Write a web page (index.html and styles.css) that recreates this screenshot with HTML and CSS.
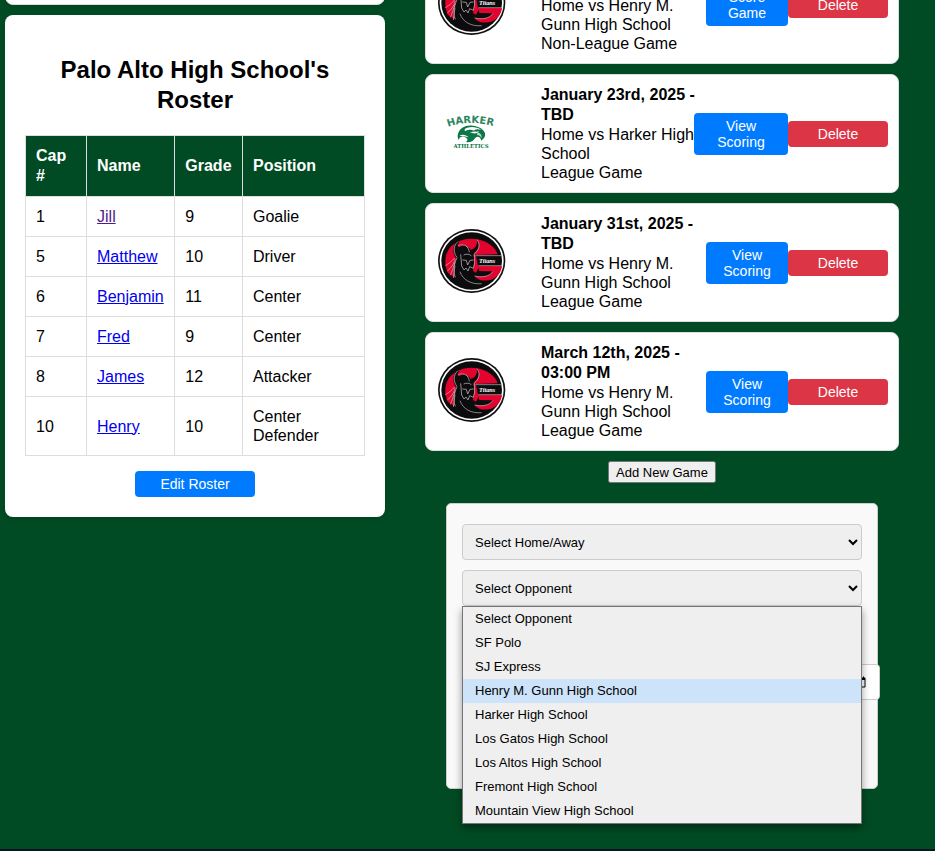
FILE: index.html
```html
<!DOCTYPE html>
<html lang="en">
<head>
<meta charset="utf-8">
<meta name="viewport" content="width=device-width, initial-scale=1">
<title>Palo Alto High School</title>
<link rel="stylesheet" href="styles.css">
</head>
<body>
<svg class="symbols" aria-hidden="true">
  <symbol id="titans" viewBox="18 37 210 210">
    <ellipse cx="125" cy="136" rx="101" ry="96" fill="#111"/>
    <ellipse cx="125" cy="136" rx="96" ry="91" fill="#fff"/>
    <ellipse cx="125" cy="136" rx="91" ry="86" fill="#0c0c0e"/>
    <path d="M84 78C100 70 121 67 142 71c32 6 54 24 61 45l-66 2-5-6c16-12 19-28 9-39 1 16-4 25-19 30-7-13-22-17-32-10-8 3-10-5-2-13z" fill="#e4032e"/>
    <path d="M76 83c-9 16-7 33 2 44-7 15-12 34-5 58l-19-13c-11-23-11-47 0-67 6-10 13-17 22-22z" fill="#e4032e"/>
    <path d="M145 151h71c-3 23-18 39-41 43-18 3-33-2-42-14 22 4 47 3 56-13l-41-1z" fill="#e4032e"/>
    <path d="M128 116c5 8 7 19 4 30l-3 20 9 5 11-20h-5l-6-31z" fill="#e4032e"/>
    <path d="M84 78c-15 12-14 34-3 47M141 72c11 14 7 32-9 44M108 90c6 5 9 12 10 20M81 126c-9 20-13 40-5 59M85 90c8-4 22-4 29 7" fill="none" stroke="#a9a4a4" stroke-width="2.5"/>
    <path d="M92 116l3 35 7 12 6-6 6 9 5-13 11 5 4-16-1-27M97 133l12 1 4 14 7-14 11-1M101 118c8-4 17-3 23 2" fill="none" stroke="#aaa" stroke-width="2.5"/>
    <path d="M76 130c-6 17-11 25-24 36M75 139c-5 17-9 29-14 40M75 150l-5 37M74 127c-8 9-16 16-28 23" fill="none" stroke="#e6b8b8" stroke-width="2"/>
    <path d="M136 120h82M145 150h73M134 181c18 5 45 3 55-14M90 168c8 25 34 39 65 36" fill="none" stroke="#bbb" stroke-width="2"/>
    <text x="147" y="143" class="titans-word">Titans</text>
  </symbol>
  <symbol id="harker" viewBox="18 -4 210 210">
    <path id="arc" d="M54 80Q124 54 204 82" fill="none"/>
    <text class="harker-word"><textPath href="#arc">HARKER</textPath></text>
    <path d="M85 97c6-15 23-24 43-21 20 2 34 11 37 23 2 9-2 16-12 22 0-7-3-11-9-12-8-1-10 9-18 14-5 3-13 4-18 2 5-3 6-8 2-11-6-5-14-7-19-3-3 2-4 5-4 9-5-8-5-15-2-23z" fill="#0d7548"/>
    <path d="M103 87c14-10 34-9 51 1-14-3-20-2-23 5 6 2 12 2 17 0-7 8-19 8-27 3-6-3-12-4-18-4 3-2 3-3 0-5z" fill="#fff"/>
    <path d="M88 106c9-5 20-3 28 5-9-3-19-4-28-5z" fill="#fff"/>
    <path d="M106 92c8-5 20-5 29 1-8 3-20 4-29-1z" fill="#0d7548"/>
    <path d="M142 96c9 2 14 9 13 17-4-6-8-8-14-9z" fill="#b9d8c9"/>
    <text x="123" y="144" text-anchor="middle" class="athletics-word">ATHLETICS</text>
  </symbol>
</svg>

<main class="page">
  <div class="team">
    <section class="card card-end"></section>
    <section class="card roster">
      <h2>Palo Alto High School's Roster</h2>
      <table>
        <thead>
          <tr><th class="cap">Cap #</th><th>Name</th><th>Grade</th><th class="position">Position</th></tr>
        </thead>
        <tbody>
          <tr><td>1</td><td><a class="visited" href="#jill">Jill</a></td><td>9</td><td>Goalie</td></tr>
          <tr><td>5</td><td><a href="#matthew">Matthew</a></td><td>10</td><td>Driver</td></tr>
          <tr><td>6</td><td><a href="#benjamin">Benjamin</a></td><td>11</td><td>Center</td></tr>
          <tr><td>7</td><td><a href="#fred">Fred</a></td><td>9</td><td>Center</td></tr>
          <tr><td>8</td><td><a href="#james">James</a></td><td>12</td><td>Attacker</td></tr>
          <tr><td>10</td><td><a href="#henry">Henry</a></td><td>10</td><td>Center Defender</td></tr>
        </tbody>
      </table>
      <button type="button" class="btn edit">Edit Roster</button>
    </section>
  </div>

  <div class="schedule">
    <article class="game">
      <svg class="logo" role="img" aria-label="Titans"><use href="#titans"/></svg>
      <div class="info"><strong>January 22nd, 2025 -<br>TBD</strong><p>Home vs Henry M. Gunn High School</p><p>Non-League Game</p></div>
      <button type="button" class="btn score">Score Game</button>
      <button type="button" class="btn delete">Delete</button>
    </article>
    <article class="game">
      <svg class="logo" role="img" aria-label="Harker Athletics"><use href="#harker"/></svg>
      <div class="info"><strong>January 23rd, 2025 -<br>TBD</strong><p>Home vs Harker High School</p><p>League Game</p></div>
      <button type="button" class="btn score wide">View Scoring</button>
      <button type="button" class="btn delete">Delete</button>
    </article>
    <article class="game">
      <svg class="logo" role="img" aria-label="Titans"><use href="#titans"/></svg>
      <div class="info"><strong>January 31st, 2025 -<br>TBD</strong><p>Home vs Henry M. Gunn High School</p><p>League Game</p></div>
      <button type="button" class="btn score">View Scoring</button>
      <button type="button" class="btn delete">Delete</button>
    </article>
    <article class="game">
      <svg class="logo" role="img" aria-label="Titans"><use href="#titans"/></svg>
      <div class="info"><strong>March 12th, 2025 -<br>03:00 PM</strong><p>Home vs Henry M. Gunn High School</p><p>League Game</p></div>
      <button type="button" class="btn score">View Scoring</button>
      <button type="button" class="btn delete">Delete</button>
    </article>

    <button type="button" class="add">Add New Game</button>

    <form class="new-game">
      <select class="field" aria-label="Home or away"><option>Select Home/Away</option><option>Home</option><option>Away</option></select>
      <div class="opponent">
        <select class="field" aria-label="Opponent"><option>Select Opponent</option></select>
        <ul class="options" role="listbox" aria-label="Opponents">
          <li role="option">Select Opponent</li>
          <li role="option">SF Polo</li>
          <li role="option">SJ Express</li>
          <li role="option" class="active" aria-selected="true">Henry M. Gunn High School</li>
          <li role="option">Harker High School</li>
          <li role="option">Los Gatos High School</li>
          <li role="option">Los Altos High School</li>
          <li role="option">Fremont High School</li>
          <li role="option">Mountain View High School</li>
        </ul>
      </div>
      <input class="field date" type="date" aria-label="Game date">
    </form>
  </div>
</main>
<footer class="footer"></footer>
</body>
</html>
```
FILE: styles.css
```css
* {
  box-sizing: border-box;
}

body {
  margin: 0;
  height: 100vh;
  overflow: hidden;
  display: flex;
  flex-direction: column;
  background: #004b23;
  color: #000;
  font: 16px/19px "Liberation Sans", Arial, sans-serif;
}

.symbols {
  position: absolute;
  width: 0;
  height: 0;
}

.page {
  flex: 1;
  min-height: 0;
  display: flex;
  align-items: flex-start;
  gap: 40px;
  padding: 0 36px 0 5px;
}

.team {
  flex: 0 0 380px;
  display: flex;
  flex-direction: column;
  gap: 10px;
}

.card {
  background: #fff;
  border-radius: 8px;
  padding: 20px;
  box-shadow: 0 2px 4px rgba(0, 0, 0, 0.1);
}

/* Tail of the card above the roster, scrolled out of view */
.card-end {
  height: 45px;
  margin-top: -40px;
  border: 1px solid #ddd;
}

.roster h2 {
  margin: 20px 0;
  font-size: 24px;
  line-height: 30px;
  text-align: center;
}

table {
  width: 100%;
  border-collapse: collapse;
}

th,
td {
  padding: 10px;
  border: 1px solid #ddd;
  text-align: left;
}

th {
  background: #004b23;
  color: #fff;
  line-height: 20px;
}

.cap {
  width: 18%;
}

.position {
  width: 36%;
}

a {
  color: #0000ee;
}

a.visited {
  color: #551a8b;
}

.btn {
  border: 0;
  border-radius: 4px;
  padding: 5px 10px;
  background: #007bff;
  color: #fff;
  font: 14px/16px "Liberation Sans", Arial, sans-serif;
  cursor: pointer;
}

.edit {
  display: block;
  width: 120px;
  margin: 15px auto 0;
}

.schedule {
  flex: 1;
  min-width: 0;
  margin-top: -55px;
  display: flex;
  flex-direction: column;
  gap: 10px;
}

.game {
  display: flex;
  align-items: center;
  padding: 10px;
  background: #fff;
  border: 1px solid #ddd;
  border-radius: 8px;
}

.logo {
  flex: none;
  width: 70px;
  height: 70px;
  margin-right: 35px;
}

.info {
  flex: 1;
  min-width: 0;
}

.info strong {
  display: block;
  line-height: 20px;
  white-space: nowrap;
}

.info p {
  margin: 0;
}

.score {
  flex: 0 0 82px;
}

.score.wide {
  flex-basis: 94px;
  padding: 5px 20px;
}

.delete {
  flex: 0 0 100px;
  background: #dc3545;
}

.add {
  align-self: center;
  height: 22px;
  padding: 1px 6px;
  font: 13px "Liberation Sans", Arial, sans-serif;
}

.new-game {
  align-self: center;
  width: 432px;
  min-height: 286px;
  margin-top: 10px;
  padding: 20px 15px;
  background: #f9f9f9;
  border: 1px solid #ccc;
  border-radius: 5px;
}

.field {
  display: block;
  width: 100%;
  height: 36px;
  padding: 8px;
  border: 1px solid #ccc;
  border-radius: 4px;
  font: 13px "Liberation Sans", Arial, sans-serif;
}

.opponent {
  position: relative;
  margin-top: 10px;
}

.options {
  position: absolute;
  z-index: 1;
  top: 100%;
  left: 0;
  right: 0;
  margin: 0;
  padding: 0;
  list-style: none;
  background: #efefef;
  border: 1px solid #767676;
  box-shadow: 0 4px 8px rgba(0, 0, 0, 0.4);
  font-size: 13px;
  line-height: 24px;
}

.options li {
  padding: 0 12px;
}

.options .active {
  background: #cce3f9;
}

.date {
  margin: 58px 0 0 18px;
  padding: 10px;
  background: #fff;
}

.footer {
  flex: 0 0 2px;
  background: #0a1626;
}

.titans-word {
  font: italic bold 19px "Liberation Serif", serif;
  fill: #fff;
}

.harker-word {
  font: bold 30px "DejaVu Sans", sans-serif;
  fill: #2f8560;
}

.athletics-word {
  font: bold 16px "DejaVu Serif", serif;
  fill: #0d7548;
}
```
